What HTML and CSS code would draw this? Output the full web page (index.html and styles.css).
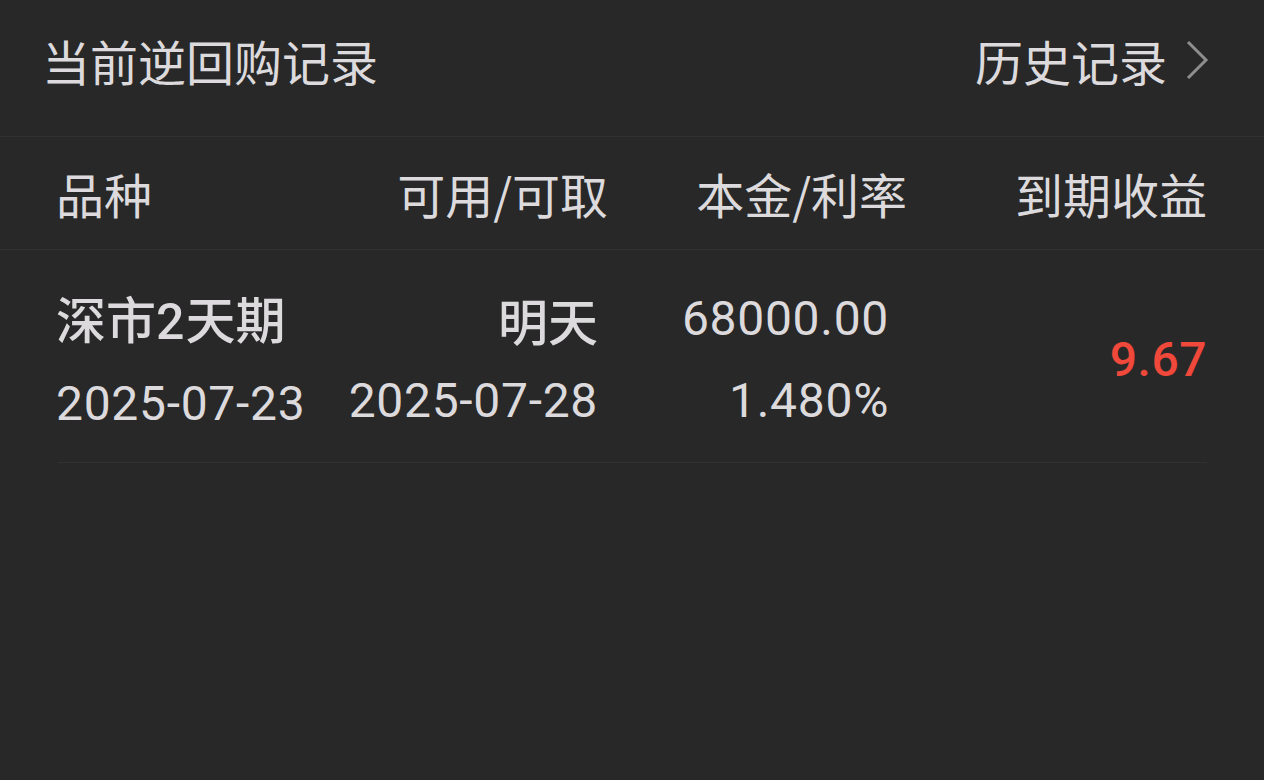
FILE: index.html
```html
<!DOCTYPE html>
<html lang="zh-CN">
<head>
<meta charset="utf-8">
<link rel="stylesheet" href="styles.css">
</head>
<body>
<div class="page">
  <div class="topbar">
    <div class="title">当前逆回购记录</div>
    <div class="history">
      <span>历史记录</span>
      <svg class="chev" width="24" height="40" viewBox="0 0 24 40"><polyline points="3,2 21,20 3,38" fill="none" stroke="#8e8e8e" stroke-width="3"/></svg>
    </div>
  </div>
  <div class="thead">
    <div class="c1">品种</div>
    <div class="c2">可用/可取</div>
    <div class="c3">本金/利率</div>
    <div class="c4">到期收益</div>
  </div>
  <div class="row">
    <div class="c1 stack">
      <div class="cn">深市<span class="num">2</span>天期</div>
      <div class="num">2025-07-23</div>
    </div>
    <div class="c2 stack d2">
      <div class="cn">明天</div>
      <div class="num">2025-07-28</div>
    </div>
    <div class="c3 stack d3">
      <div class="num">68000.00</div>
      <div class="num">1.480%</div>
    </div>
    <div class="c4 profit num">9.67</div>
  </div>
</div>
</body>
</html>
```
FILE: styles.css
```css
html, body {
  margin: 0;
  padding: 0;
  background: #282828;
}
body {
  width: 1264px;
  height: 780px;
  overflow: hidden;
  font-family: "Noto Sans CJK SC", "Noto Sans", sans-serif;
  color: #dcdadc;
}
.page {
  display: flex;
  flex-direction: column;
}
.topbar {
  height: 137px;
  display: flex;
  align-items: center;
  justify-content: space-between;
  padding: 0 55px 16px 42px;
  box-sizing: border-box;
  border-bottom: 1px solid #313131;
}
.title, .history {
  font-size: 48px;
  line-height: 56px;
}
.history {
  display: flex;
  align-items: center;
  gap: 18px;
}
.chev { display: block; }
.thead, .row {
  display: grid;
  grid-template-columns: 230px 320px 299px 300px;
  padding: 0 57px 0 58px;
  white-space: nowrap;
}
.thead {
  height: 112px;
  align-items: center;
  font-size: 48px;
  line-height: 56px;
  border-bottom: 1px solid #313131;
}
.thead .c1 { margin-left: -2px; }
.c2, .c3, .c4 { text-align: right; }
.row {
  height: 213px;
  align-items: center;
  border-bottom: 1px solid #313131;
  margin: 0 57px 0 58px;
  padding: 8px 0 0 0;
  box-sizing: border-box;
}
.stack {
  display: flex;
  flex-direction: column;
  gap: 26px;
}
.c1.stack { margin-left: -2px; }
.d2 { padding-right: 10px; }
.d3 { padding-right: 18px; }
.cn {
  font-size: 50px;
  line-height: 56px;
  font-weight: 500;
}
.num {
  font-family: "Roboto", "Liberation Sans", sans-serif;
  font-size: 48px;
  line-height: 56px;
  letter-spacing: 0.7px;
  font-weight: 400;
}
.cn .num { font-size: 50px; font-weight: 500; letter-spacing: 1px; }
.profit {
  color: #f0483a;
  letter-spacing: 0.5px;
  font-weight: 500;
}
```
